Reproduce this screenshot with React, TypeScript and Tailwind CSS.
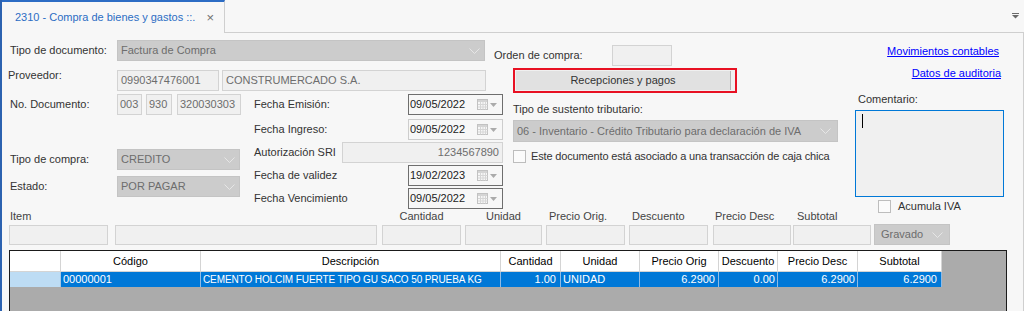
import React from "react";

const Chevron = () => (
  <svg width="11" height="6" viewBox="0 0 11 6" className="shrink-0">
    <polyline points="0.5,0.5 5.5,5.5 10.5,0.5" fill="none" stroke="#e6e6e6" strokeWidth="1" />
  </svg>
);

const Calendar = () => (
  <span className="flex items-center gap-[2px] shrink-0">
    <svg width="11" height="11" viewBox="0 0 11 11">
      <rect x="0.5" y="0.5" width="10" height="10" fill="#f6f6f6" stroke="#c2c2c2" />
      <rect x="1" y="1" width="9" height="2" fill="#d4d4d4" />
      <path d="M3.5 3v7.5M6 3v7.5M8.5 3v7.5M1 5.5h9.5M1 8h9.5" stroke="#d6d6d6" strokeWidth="1" />
    </svg>
    <svg width="7" height="4" viewBox="0 0 7 4">
      <polygon points="0,0 7,0 3.5,4" fill="#ababab" />
    </svg>
  </span>
);

const DateBox = ({ value, light }: { value: string; light?: boolean }) => (
  <div
    className={
      "w-[95px] h-[21px] border bg-[#f7f7f7] flex items-center justify-between pl-[1px] pr-[5px] text-[#222] " +
      (light ? "border-[#cdcdcd]" : "border-[#6e6e6e]")
    }
  >
    <span>{value}</span>
    <Calendar />
  </div>
);

const Check = () => <div className="w-[13px] h-[13px] border border-[#bdbdbd] bg-[#fbfbfb] shrink-0" />;

export default function App() {
  return (
    <div className="w-[1030px] h-[316px] bg-white overflow-hidden whitespace-nowrap font-['Liberation_Sans',Arial,sans-serif] text-[11px] leading-[13px] text-[#333]">
      <div className="w-[1024px] h-[311px] border-l-2 border-[#2c62b0] bg-[#f7f7f7] flex flex-col overflow-hidden">
        {/* tab bar */}
        <div className="flex h-[33px] shrink-0">
          <div className="w-[223px] h-[33px] border-t-2 border-[#2c6cc4] border-r border-r-[#cfcfcf] flex items-center pl-[13px] pr-[10px] justify-between">
            <span className="text-[#2b6dc4]">2310 - Compra de bienes y gastos ::.</span>
            <span className="text-[#707070] text-[13px] leading-none">×</span>
          </div>
          <div className="flex-1 h-[33px] border-b border-[#cfcfcf] flex items-center justify-end pr-[5px]">
            <svg width="7" height="6" viewBox="0 0 7 6">
              <rect x="0" y="0" width="7" height="1" fill="#6a6a6a" />
              <polygon points="0,2 7,2 3.5,5.5" fill="#6a6a6a" />
            </svg>
          </div>
        </div>

        {/* content */}
        <div className="flex-1 border-r border-[#cfcfcf] flex flex-col overflow-hidden">
          <div className="flex h-[176px] shrink-0">
            {/* left area */}
            <div className="w-[838px] flex flex-col">
              {/* row 1 */}
              <div className="flex items-start h-[21px] mt-[7px]">
                <div className="ml-[8px] w-[107px] h-[21px] flex items-center">Tipo de documento:</div>
                <div className="w-[368px] h-[21px] bg-[#cccccc] border border-[#c4c4c4] text-[#6d6d6d] flex items-center justify-between pl-[3px] pr-[4px]">
                  <span>Factura de Compra</span>
                  <Chevron />
                </div>
                <div className="ml-[9px] mt-[5px] flex items-center">
                  <span className="w-[118px]">Orden de compra:</span>
                  <div className="w-[60px] h-[21px] border border-[#d3d3d3] bg-[#f0f0f0]" />
                </div>
              </div>

              {/* row 2 */}
              <div className="flex items-start h-[25px] mt-[7px]">
                <div className="ml-[6px] w-[109px] mt-[1px] h-[13px]">Proveedor:</div>
                <div className="mt-[2px] w-[102px] h-[21px] border border-[#d3d3d3] bg-[#f0f0f0] text-[#6d6d6d] flex items-center pl-[3px]">
                  0990347476001
                </div>
                <div className="ml-[3px] mt-[2px] w-[264px] h-[21px] border border-[#d3d3d3] bg-[#f0f0f0] text-[#6d6d6d] flex items-center pl-[3px]">
                  CONSTRUMERCADO S.A.
                </div>
                <div className="ml-[27px] w-[224px] h-[25px] border-2 border-[#e81123] bg-[#f0f0f0] flex">
                  <div className="ml-[1px] my-[1px] w-[215px] bg-[#e1e1e1] border-r border-[#b4b4b4] flex items-center justify-center text-[#333]">
                    Recepciones y pagos
                  </div>
                </div>
              </div>

              {/* lower block */}
              <div className="flex">
                {/* col 1 */}
                <div className="ml-[6px] w-[233px] flex flex-col">
                  <div className="mt-[1px] h-[21px] flex items-center">
                    <div className="ml-[2px] w-[107px]">No. Documento:</div>
                    <div className="w-[25px] h-[21px] border border-[#d3d3d3] bg-[#f0f0f0] text-[#6d6d6d] flex items-center pl-[2px]">003</div>
                    <div className="ml-[4px] w-[26px] h-[21px] border border-[#d3d3d3] bg-[#f0f0f0] text-[#6d6d6d] flex items-center pl-[2px]">930</div>
                    <div className="ml-[5px] w-[64px] h-[21px] border border-[#d3d3d3] bg-[#f0f0f0] text-[#6d6d6d] flex items-center pl-[2px]">320030303</div>
                  </div>
                  <div className="mt-[34px] h-[21px] flex items-center">
                    <div className="ml-[2px] w-[107px]">Tipo de compra:</div>
                    <div className="w-[123px] h-[21px] bg-[#cccccc] border border-[#c4c4c4] text-[#6d6d6d] flex items-center justify-between pl-[3px] pr-[4px]">
                      <span>CREDITO</span>
                      <Chevron />
                    </div>
                  </div>
                  <div className="mt-[6px] h-[21px] flex items-center">
                    <div className="ml-[2px] w-[107px]">Estado:</div>
                    <div className="w-[123px] h-[21px] bg-[#cccccc] border border-[#c4c4c4] text-[#6d6d6d] flex items-center justify-between pl-[3px] pr-[4px]">
                      <span>POR PAGAR</span>
                      <Chevron />
                    </div>
                  </div>
                </div>

                {/* col 2 */}
                <div className="ml-[13px] w-[249px] flex flex-col">
                  <div className="mt-[1px] h-[21px] flex items-center">
                    <div className="w-[154px]">Fecha Emisión:</div>
                    <DateBox value="09/05/2022" />
                  </div>
                  <div className="mt-[4px] h-[21px] flex items-center">
                    <div className="w-[154px]">Fecha Ingreso:</div>
                    <DateBox value="09/05/2022" light />
                  </div>
                  <div className="mt-[2px] h-[21px] flex items-center">
                    <div className="w-[88px]">Autorización SRI</div>
                    <div className="w-[161px] h-[21px] border border-[#d3d3d3] bg-[#f0f0f0] text-[#6d6d6d] flex items-center justify-end pr-[3px]">
                      1234567890
                    </div>
                  </div>
                  <div className="mt-[2px] h-[21px] flex items-center">
                    <div className="w-[154px]">Fecha de validez</div>
                    <DateBox value="19/02/2023" />
                  </div>
                  <div className="mt-[2px] h-[21px] flex items-center">
                    <div className="w-[154px]">Fecha Vencimiento</div>
                    <DateBox value="09/05/2022" />
                  </div>
                </div>

                {/* col 3 */}
                <div className="ml-[10px] w-[325px] flex flex-col">
                  <div className="mt-[10px] h-[13px]">Tipo de sustento tributario:</div>
                  <div className="mt-[4px] w-[325px] h-[22px] bg-[#cccccc] border border-[#c4c4c4] text-[#6d6d6d] flex items-center justify-between pl-[3px] pr-[6px]">
                    <span>06 - Inventario - Crédito Tributario para declaración de IVA</span>
                    <Chevron />
                  </div>
                  <div className="mt-[8px] h-[13px] flex items-center">
                    <Check />
                    <span className="ml-[5px] tracking-[-0.15px]">Este documento está asociado a una transacción de caja chica</span>
                  </div>
                </div>
              </div>
            </div>

            {/* right column */}
            <div className="ml-[15px] w-[149px] flex flex-col">
              <div className="mt-[12px] h-[13px] text-right pr-[5px]">
                <span className="text-[#0000ff] underline">Movimientos contables</span>
              </div>
              <div className="mt-[9px] h-[13px] text-right pr-[3px]">
                <span className="text-[#0000ff] underline">Datos de auditoria</span>
              </div>
              <div className="mt-[13px] h-[13px] pl-[3px]">Comentario:</div>
              <div className="mt-[4px] w-[149px] h-[87px] shrink-0 border border-[#0078d7] bg-[#f0f0f0]">
                <div className="ml-[6px] mt-[3px] w-[1px] h-[14px] bg-black" />
              </div>
              <div className="mt-[3px] h-[13px] flex items-center shrink-0">
                <div className="ml-[23px]">
                  <Check />
                </div>
                <span className="ml-[7px]">Acumula IVA</span>
              </div>
            </div>
          </div>

          {/* item labels */}
          <div className="flex h-[14px] ml-[7px] items-center text-[#444] shrink-0">
            <div className="w-[99px] pl-[1px]">Item</div>
            <div className="w-[262px] ml-[7px]" />
            <div className="w-[79px] ml-[5px] text-center">Cantidad</div>
            <div className="w-[77px] ml-[4px] text-center">Unidad</div>
            <div className="w-[79px] ml-[4px] pl-[3px]">Precio Orig.</div>
            <div className="w-[79px] ml-[4px] pl-[3px]">Descuento</div>
            <div className="w-[78px] ml-[5px] pl-[2px]">Precio Desc</div>
            <div className="w-[78px] ml-[2px] pl-[4px]">Subtotal</div>
          </div>

          {/* item inputs */}
          <div className="flex items-start h-[20px] mt-[2px] ml-[7px] shrink-0">
            <div className="w-[99px] h-[20px] border border-[#d3d3d3] bg-[#f0f0f0]" />
            <div className="w-[262px] ml-[7px] h-[20px] border border-[#d3d3d3] bg-[#f0f0f0]" />
            <div className="w-[79px] ml-[5px] h-[20px] border border-[#d3d3d3] bg-[#f0f0f0]" />
            <div className="w-[77px] ml-[4px] h-[20px] border border-[#d3d3d3] bg-[#f0f0f0]" />
            <div className="w-[79px] ml-[4px] h-[20px] border border-[#d3d3d3] bg-[#f0f0f0]" />
            <div className="w-[79px] ml-[4px] h-[20px] border border-[#d3d3d3] bg-[#f0f0f0]" />
            <div className="w-[78px] ml-[5px] h-[20px] border border-[#d3d3d3] bg-[#f0f0f0]" />
            <div className="w-[78px] ml-[2px] h-[20px] border border-[#d3d3d3] bg-[#f0f0f0]" />
            <div className="w-[76px] ml-[3px] -mt-[1px] h-[21px] bg-[#cccccc] border border-[#c4c4c4] text-[#6d6d6d] flex items-center justify-between pl-[6px] pr-[6px]">
              <span>Gravado</span>
              <Chevron />
            </div>
          </div>

          {/* grid */}
          <div className="ml-[7px] mt-[5px] w-[998px] h-[61px] shrink-0 border border-b-0 border-[#1a1a1a] bg-[#ababab] overflow-hidden text-black">
            <div className="flex h-[21px]">
              <div className="w-[51px] bg-white border-r border-b border-[#d4d4d4]" />
              <div className="w-[140px] bg-white border-r border-b border-[#d4d4d4] flex items-center justify-center">Código</div>
              <div className="w-[300px] bg-white border-r border-b border-[#d4d4d4] flex items-center justify-center">Descripción</div>
              <div className="w-[60px] bg-white border-r border-b border-[#d4d4d4] flex items-center justify-center">Cantidad</div>
              <div className="w-[79px] bg-white border-r border-b border-[#d4d4d4] flex items-center justify-center">Unidad</div>
              <div className="w-[79px] bg-white border-r border-b border-[#d4d4d4] flex items-center justify-center">Precio Orig</div>
              <div className="w-[59px] bg-white border-r border-b border-[#d4d4d4] flex items-center justify-center">Descuento</div>
              <div className="w-[80px] bg-white border-r border-b border-[#d4d4d4] flex items-center justify-center">Precio Desc</div>
              <div className="w-[84px] bg-white border-r border-b border-[#d4d4d4] flex items-center justify-center">Subtotal</div>
            </div>
            <div className="flex h-[15px] text-white">
              <div className="w-[51px] bg-[#bddcf4] border-r border-[#a8c8e4]" />
              <div className="w-[140px] bg-[#0078d7] border-r border-[#8fbbe6] flex items-center pl-[2px]">00000001</div>
              <div className="w-[300px] bg-[#0078d7] border-r border-[#8fbbe6] flex items-center pl-[2px] overflow-hidden text-[10px] tracking-[-0.1px]">CEMENTO HOLCIM FUERTE TIPO GU SACO 50 PRUEBA KG</div>
              <div className="w-[60px] bg-[#0078d7] border-r border-[#8fbbe6] flex items-center justify-end pr-[4px]">1.00</div>
              <div className="w-[79px] bg-[#0078d7] border-r border-[#8fbbe6] flex items-center pl-[2px]">UNIDAD</div>
              <div className="w-[79px] bg-[#0078d7] border-r border-[#8fbbe6] flex items-center justify-end pr-[3px]">6.2900</div>
              <div className="w-[59px] bg-[#0078d7] border-r border-[#8fbbe6] flex items-center justify-end pr-[2px]">0.00</div>
              <div className="w-[80px] bg-[#0078d7] border-r border-[#8fbbe6] flex items-center justify-end pr-[2px]">6.2900</div>
              <div className="w-[84px] bg-[#0078d7] border-r border-[#8fbbe6] flex items-center justify-end pr-[4px]">6.2900</div>
            </div>
          </div>
        </div>
      </div>
    </div>
  );
}
